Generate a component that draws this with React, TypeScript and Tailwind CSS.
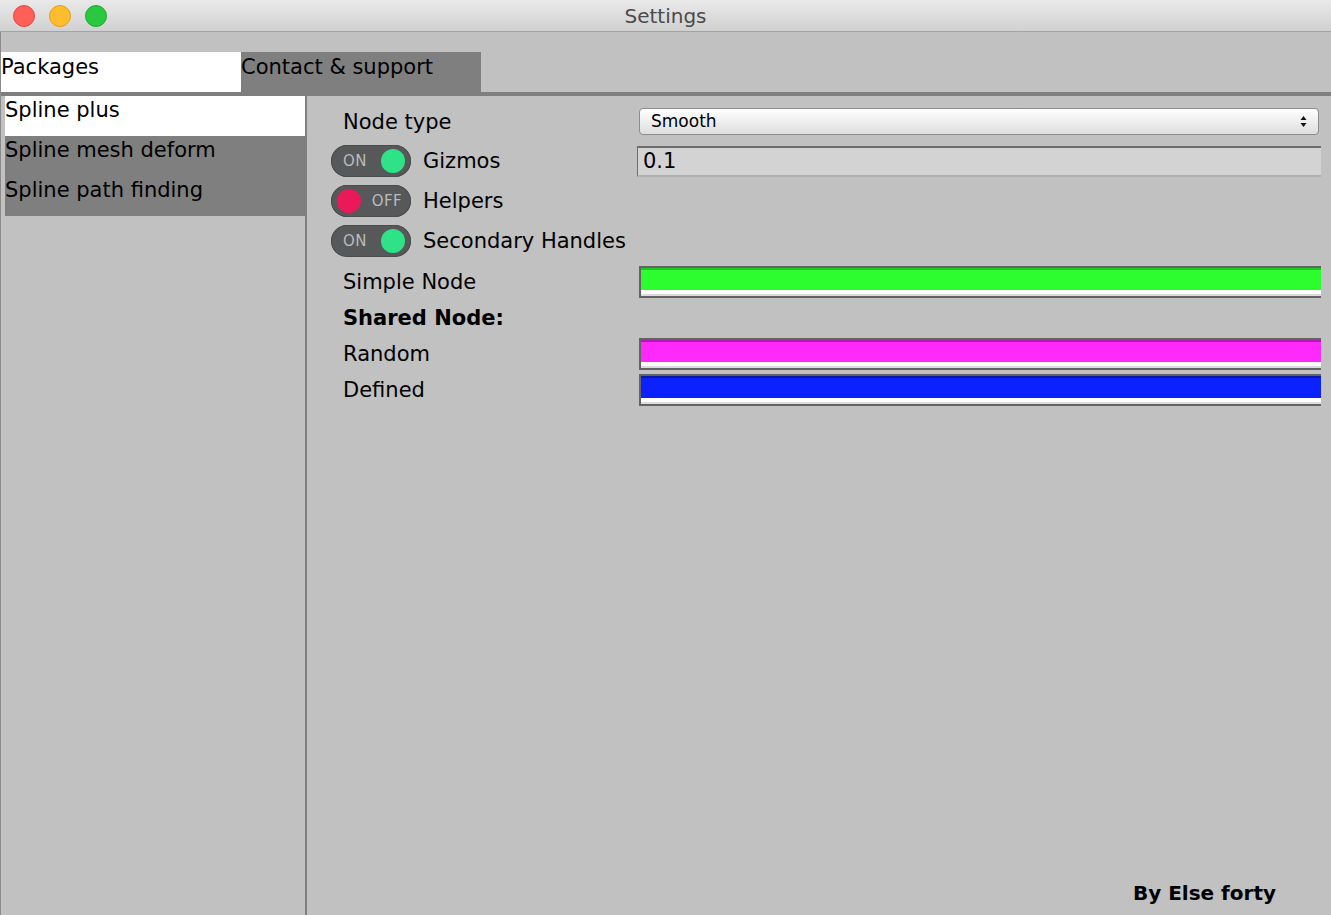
import React from "react";

const font = { fontFamily: '"DejaVu Sans", Verdana, sans-serif' };

const Toggle = ({ on }: { on: boolean }) => (
    <div className="w-[80px] h-[32px] rounded-full bg-[#56585a] shadow-[inset_0_0_0_1px_#4a4c4e] flex items-center px-[6px] shrink-0">
        {on ? (
            <>
                <span className="text-[15px] text-[#b9bbbd] ml-[6px] tracking-wide">ON</span>
                <span className="ml-auto w-[24px] h-[24px] rounded-full bg-[#2fe288]" />
            </>
        ) : (
            <>
                <span className="w-[24px] h-[24px] rounded-full bg-[#ea1a5a]" />
                <span className="text-[15px] text-[#b9bbbd] ml-auto mr-[3px] tracking-wide">OFF</span>
            </>
        )}
    </div>
);

const ColorField = ({ dark, fill }: { dark: string; fill: string }) => (
    <div className="flex-1 h-[32px] flex flex-col border-2 border-[#636363] border-r-0">
        <div className="h-[2px]" style={{ background: dark }} />
        <div className="flex-1" style={{ background: fill }} />
        <div className="h-[4px] bg-white" />
        <div className="h-[2px] bg-[#dcdcdc]" />
    </div>
);

const App = () => {
    const packages = ["Spline plus", "Spline mesh deform", "Spline path finding"];

    return (
        <div className="w-[1331px] h-[915px] flex flex-col bg-[#c1c1c1] text-black overflow-hidden" style={font}>
            {/* title bar */}
            <div className="h-[32px] shrink-0 relative flex items-center justify-center bg-gradient-to-b from-[#e9e9e9] to-[#d1d1d1] border-b border-[#a3a3a3]">
                <div className="absolute left-[13px] top-[5px] flex gap-[14px]">
                    <span className="w-[22px] h-[22px] rounded-full bg-[#fe5f57] border border-[#e2463f]" />
                    <span className="w-[22px] h-[22px] rounded-full bg-[#febc2e] border border-[#e1a116]" />
                    <span className="w-[22px] h-[22px] rounded-full bg-[#2ac840] border border-[#1aab29]" />
                </div>
                <span className="text-[20px] text-[#4b4b4b]">Settings</span>
            </div>

            <div className="flex-1 flex flex-col border-l border-[#8a8a8a]">
                {/* tabs */}
                <div className="pt-[20px] flex">
                    <div className="w-[240px] h-[40px] bg-white text-[21px] leading-[30px]">Packages</div>
                    <div className="w-[240px] h-[40px] bg-[#7f7f7f] text-[21px] leading-[30px]">Contact &amp; support</div>
                </div>
                <div className="h-[4px] bg-[#7f7f7f]" />

                <div className="flex-1 flex">
                    {/* package list */}
                    <div className="w-[304px] pl-[4px] flex flex-col">
                        {packages.map((name, idx) => (
                            <div
                                key={idx}
                                className={`h-[40px] text-[21px] leading-[28px] ${idx === 0 ? "bg-white" : "bg-[#7f7f7f]"}`}
                            >
                                {name}
                            </div>
                        ))}
                    </div>
                    <div className="w-[2px] bg-[#7f7f7f]" />

                    {/* settings panel */}
                    <div className="flex-1 flex flex-col pt-[6px] pl-[24px] text-[21px]">
                        <div className="h-[39px] flex items-center">
                            <span className="w-[308px] pl-[12px] pt-[2px]">Node type</span>
                            <div className="flex-1 mr-[12px] h-[27px] rounded-[4px] border border-[#8c8c8c] bg-gradient-to-b from-white to-[#dedede] flex items-center px-[11px] text-[17px]">
                                <span>Smooth</span>
                                <svg className="ml-auto" width="7" height="13" viewBox="0 0 7 13">
                                    <path d="M3.5 1 L6.5 5 L0.5 5 Z M3.5 12 L6.5 8 L0.5 8 Z" fill="#111" />
                                </svg>
                            </div>
                        </div>

                        <div className="h-[40px] flex items-center">
                            <Toggle on />
                            <span className="w-[226px] pl-[12px] pt-[2px]">Gizmos</span>
                            <div className="flex-1 mr-[10px] h-[31px] bg-[#d3d3d3] border-t-2 border-l border-[#6e6e6e] border-b-2 border-b-[#b0b0b0] flex items-center pl-[5px] pt-[2px]">
                                0.1
                            </div>
                        </div>
                        <div className="h-[40px] flex items-center">
                            <Toggle on={false} />
                            <span className="pl-[12px] pt-[2px]">Helpers</span>
                        </div>
                        <div className="h-[40px] flex items-center">
                            <Toggle on />
                            <span className="pl-[12px] pt-[2px]">Secondary Handles</span>
                        </div>

                        <div className="mt-[3px] h-[36px] flex items-center">
                            <span className="w-[308px] pl-[12px] pt-[2px]">Simple Node</span>
                            <ColorField dark="#1fc822" fill="#2bfd2f" />
                            <div className="w-[10px]" />
                        </div>
                        <div className="h-[36px] flex items-center">
                            <span className="pl-[12px] pt-[2px] font-bold">Shared Node:</span>
                        </div>
                        <div className="h-[36px] flex items-center">
                            <span className="w-[308px] pl-[12px] pt-[2px]">Random</span>
                            <ColorField dark="#b01bb0" fill="#ff29fb" />
                            <div className="w-[10px]" />
                        </div>
                        <div className="h-[36px] flex items-center">
                            <span className="w-[308px] pl-[12px] pt-[2px]">Defined</span>
                            <ColorField dark="#0a1aa8" fill="#0b22ff" />
                            <div className="w-[10px]" />
                        </div>

                        <div className="mt-auto flex justify-end pr-[55px] pb-[7px]">
                            <span className="font-bold text-[20px]">By Else forty</span>
                        </div>
                    </div>
                </div>
            </div>
        </div>
    );
};

export default App;
